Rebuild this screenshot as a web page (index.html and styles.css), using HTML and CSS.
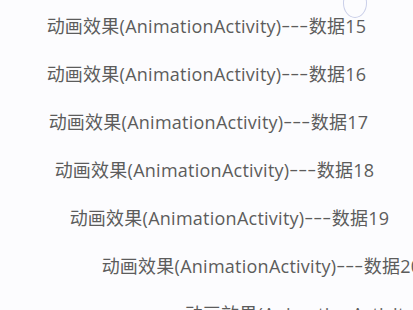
FILE: index.html
```html
<!DOCTYPE html>
<html lang="zh-CN">
<head>
  <meta charset="UTF-8" />
  <meta name="viewport" content="width=device-width, initial-scale=1.0" />
  <title>动画效果</title>
  <link rel="stylesheet" href="styles.css">
</head>
<body>
  <!-- Touch ripple indicator -->
  <div class="touch-ring"></div>

  <ul class="list">
    <li class="item" style="transform: translateX(0px)">动画效果(AnimationActivity)<span class="dash">---</span>数据15</li>
    <li class="item" style="transform: translateX(0px)">动画效果(AnimationActivity)<span class="dash">---</span>数据16</li>
    <li class="item" style="transform: translateX(2px)">动画效果(AnimationActivity)<span class="dash">---</span>数据17</li>
    <li class="item" style="transform: translateX(8px)">动画效果(AnimationActivity)<span class="dash">---</span>数据18</li>
    <li class="item" style="transform: translateX(23px)">动画效果(AnimationActivity)<span class="dash">---</span>数据19</li>
    <li class="item" style="transform: translateX(55px)">动画效果(AnimationActivity)<span class="dash">---</span>数据20</li>
    <li class="item" style="transform: translateX(138px)">动画效果(AnimationActivity)<span class="dash">---</span>数据21</li>
  </ul>
</body>
</html>
```

FILE: styles.css
```css
html, body {
  width: 100%;
  height: 100%;
  margin: 0;
  padding: 0;
  overflow: hidden;
  background: #fcfcfe;
  font-family: "Open Sans", "Noto Sans CJK SC", sans-serif;
  position: relative;
}
.list {
  list-style: none;
  margin: 0;
  padding: 1px 0 0;
}
.item {
  height: 48px;
  display: flex;
  align-items: center;
  justify-content: center;
  font-size: 18px;
  letter-spacing: 0.25px;
  color: #5c5c5c;
  white-space: nowrap;
}
/* long thin dashes like the device font */
.dash {
  display: inline-block;
  letter-spacing: 0;
  margin: 0 5px;
  transform: scaleX(1.55);
}

/* Touch ripple indicator */
.touch-ring {
  position: absolute;
  top: -12px;
  left: 343px;
  width: 22px;
  height: 28px;
  border: 1.5px solid rgba(160, 170, 215, 0.55);
  border-radius: 50%;
}
```
